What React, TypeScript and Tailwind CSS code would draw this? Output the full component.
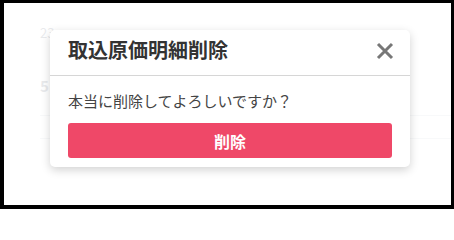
export default function App() {
  return (
    <div
      className="w-[454px] h-[209px] border-t-[3px] border-l-4 border-r-[3px] border-b-4 border-black bg-white relative overflow-hidden"
      style={{ fontFamily: '"Noto Sans CJK JP", "Noto Sans", sans-serif' }}
    >
      {/* page behind the dialog */}
      <div className="pl-[36px] pt-[20px] text-[13px] text-gray-500">
        <div>23</div>
        <div className="mt-[32px] text-[15px] font-bold">5</div>
        <div className="mt-[18px] border-t border-gray-300" />
        <div className="mt-[22px] border-t border-gray-300" />
      </div>

      {/* overlay */}
      <div className="absolute inset-0 bg-white/85 pl-[46px] pt-[27px]">
        <div className="w-[360px] bg-white rounded-[5px] shadow-[0_3px_10px_rgba(0,0,0,0.18)]">
          <div className="h-[46px] flex items-start justify-between pl-[18px] pr-[16px] pt-[6px] border-b border-[#d6d6d6]">
            <h2 className="text-[20px] leading-[28px] font-bold text-[#333]">取込原価明細削除</h2>
            <button className="mt-[6px]">
              <svg width="18" height="18" viewBox="0 0 18 18">
                <path d="M2 2L16 16M16 2L2 16" stroke="#777" strokeWidth="3" />
              </svg>
            </button>
          </div>
          <div className="px-[18px] pt-[15px] pb-[9px]">
            <p className="text-[15px] leading-[20px] text-[#444]">本当に削除してよろしいですか？</p>
            <button className="mt-[12px] w-full h-[35px] rounded-[3px] bg-[#ef4868] text-white text-[16px] font-bold">
              削除
            </button>
          </div>
        </div>
      </div>
    </div>
  );
}
